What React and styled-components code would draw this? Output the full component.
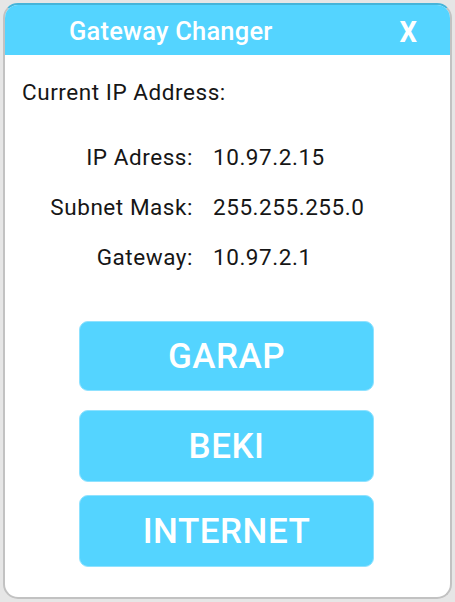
import React from "react";
import styled, { createGlobalStyle } from "styled-components";

const Global = createGlobalStyle`
  html, body { margin: 0; padding: 0; background: #e6e6e6; }
  body { font-family: Roboto, "Liberation Sans", sans-serif; }
`;

const Window = styled.div`
  box-sizing: border-box;
  margin: 3px 0 0 3px;
  width: 449px;
  height: 596px;
  background: #fff;
  border: 2px solid #c2c2c2;
  border-top-color: #45b4d9;
  border-radius: 15px;
  overflow: hidden;
  display: flex;
  flex-direction: column;
`;

const Header = styled.div`
  height: 50px;
  flex: none;
  background: #54d4ff;
  display: flex;
  align-items: center;
  color: #fff;
`;

const Title = styled.div`
  margin-left: 64px;
  font-size: 25.5px;
  font-weight: 500;
  letter-spacing: 0.2px;
  margin-top: 1px;
`;

const Close = styled.div`
  margin-left: auto;
  margin-right: 33px;
  font-size: 29px;
  font-weight: 700;
  margin-top: 4px;
  transform: scaleX(0.95);
`;

const Body = styled.div`
  padding: 25px 0 0 17px;
  display: flex;
  flex-direction: column;
  font-size: 22.5px;
  letter-spacing: 0.55px;
  color: #161616;
`;

const Heading = styled.div`
  line-height: 24px;
`;

const Info = styled.div`
  display: grid;
  grid-template-columns: 171px auto;
  column-gap: 20px;
  margin-top: 28px;
  grid-auto-rows: 50px;
  align-items: center;
`;

const Label = styled.div`
  text-align: right;
`;

const Value = styled.div``;

const Buttons = styled.div`
  display: flex;
  flex-direction: column;
  align-items: center;
  margin-top: 39px;
  padding-right: 19px;
`;

const Btn = styled.button`
  width: 295px;
  height: ${(p) => p.h}px;
  margin-bottom: ${(p) => p.gap}px;
  background: #54d4ff;
  border: 1px solid #8fe2ff;
  border-radius: 9px;
  color: #fff;
  font-family: Roboto, "Liberation Sans", sans-serif;
  font-size: 35px;
  font-weight: 500;
  letter-spacing: 0.5px;
  padding: 0;
`;

export default function App() {
  return (
    <>
      <Global />
      <Window>
        <Header>
          <Title>Gateway Changer</Title>
          <Close>X</Close>
        </Header>
        <Body>
          <Heading>Current IP Address:</Heading>
          <Info>
            <Label>IP Adress:</Label>
            <Value>10.97.2.15</Value>
            <Label>Subnet Mask:</Label>
            <Value>255.255.255.0</Value>
            <Label>Gateway:</Label>
            <Value>10.97.2.1</Value>
          </Info>
          <Buttons>
            <Btn h={70} gap={19}>GARAP</Btn>
            <Btn h={72} gap={13}>BEKI</Btn>
            <Btn h={72} gap={0}>INTERNET</Btn>
          </Buttons>
        </Body>
      </Window>
    </>
  );
}
